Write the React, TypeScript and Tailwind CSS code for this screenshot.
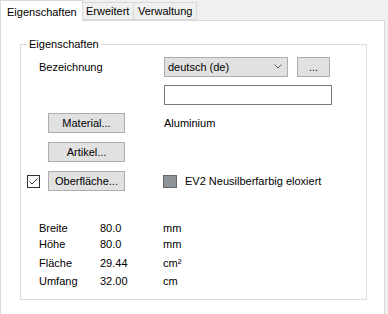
import React from "react";

const btn =
  "flex items-center justify-center bg-[#e1e1e1] border border-[#adadad] text-[11px] leading-none";

function PushButton({ label }: { label: string }) {
  return <div className={`${btn} w-[77px] h-[20px]`}>{label}</div>;
}

export default function App() {
  const rows = [
    { label: "Breite", value: "80.0", unit: "mm", mt: "mt-0" },
    { label: "Höhe", value: "80.0", unit: "mm", mt: "mt-0" },
    { label: "Fläche", value: "29.44", unit: "cm²", mt: "mt-[3px]" },
    { label: "Umfang", value: "32.00", unit: "cm", mt: "mt-[2px]" },
  ];

  return (
    <div className="w-[388px] h-[314px] overflow-hidden bg-[#f0f0f0] text-black text-[11px] font-['Liberation_Sans',Arial,sans-serif]">
      {/* Tabs */}
      <div className="flex items-end h-[20px]">
        <div className="relative z-10 -mb-px flex h-[21px] w-[83px] items-start bg-white border border-b-0 border-[#d9d9d9] pl-[6px] pt-[3px]">
          Eigenschaften
        </div>
        <div className="flex h-[18px] w-[51px] items-center border border-l-0 border-[#d9d9d9] pl-[3px]">
          Erweitert
        </div>
        <div className="flex h-[18px] w-[63px] items-center border border-l-0 border-[#d9d9d9] pl-[4px]">
          Verwaltung
        </div>
      </div>

      {/* Panel */}
      <div className="w-[385px] h-[300px] bg-white border border-[#d9d9d9] pl-[19px]">
        <fieldset className="mt-[17px] w-[347px] h-[262px] border border-[#dcdcdc] px-0">
          <legend className="ml-[6px] px-[2px] leading-[13px]">Eigenschaften</legend>

          {/* Bezeichnung */}
          <div className="mt-[6px] flex h-[20px] items-center">
            <div className="w-[143px] pl-[18px]">Bezeichnung</div>
            <div className="flex h-[20px] w-[124px] items-center justify-between bg-[#e1e1e1] border border-[#adadad] pl-[3px] pr-[5px]">
              <span>deutsch (de)</span>
              <svg width="8" height="5" viewBox="0 0 8 5" className="mb-[1px]">
                <path d="M0.5 0.5 L4 4 L7.5 0.5" fill="none" stroke="#606060" strokeWidth="1" />
              </svg>
            </div>
            <div className={`${btn} ml-[9px] h-[20px] w-[33px]`}>...</div>
          </div>

          {/* Textfeld */}
          <div className="mt-[8px] flex h-[20px]">
            <div className="ml-[143px] h-[20px] w-[168px] border border-[#7a7a7a] bg-white" />
          </div>

          {/* Material */}
          <div className="mt-[8px] flex h-[20px] items-center">
            <div className="ml-[27px]">
              <PushButton label="Material..." />
            </div>
            <span className="ml-[39px]">Aluminium</span>
          </div>

          {/* Artikel */}
          <div className="mt-[9px] flex h-[20px] items-center">
            <div className="ml-[27px]">
              <PushButton label="Artikel..." />
            </div>
          </div>

          {/* Oberfläche */}
          <div className="mt-[9px] flex h-[20px] items-center">
            <div className="ml-[6px] flex h-[13px] w-[13px] items-center justify-center border border-[#333333] bg-white">
              <svg width="9" height="7" viewBox="0 0 9 7">
                <path d="M0.5 3.5 L3 6 L8.5 0.5" fill="none" stroke="#333333" strokeWidth="1" />
              </svg>
            </div>
            <div className="ml-[8px]">
              <PushButton label="Oberfläche..." />
            </div>
            <div className="ml-[38px] h-[13px] w-[14px] border border-[#666b70] bg-[#8f9499]" />
            <span className="ml-[8px]">EV2 Neusilberfarbig eloxiert</span>
          </div>

          {/* Maße */}
          <div className="mt-[29px]">
            {rows.map((r) => (
              <div key={r.label} className={`${r.mt} flex h-[16px] items-center`}>
                <span className="w-[79px] pl-[18px]">{r.label}</span>
                <span className="w-[63px]">{r.value}</span>
                <span>{r.unit}</span>
              </div>
            ))}
          </div>
        </fieldset>
      </div>
    </div>
  );
}
